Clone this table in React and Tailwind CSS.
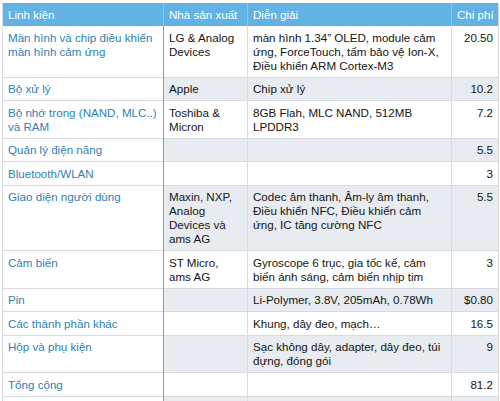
import React from "react";

const rows = [
  ["Màn hình và chip điều khiển màn hình cảm ứng", "LG & Analog Devices", "màn hình 1.34” OLED, module cảm ứng, ForceTouch, tấm bảo vệ Ion-X, Điều khiển ARM Cortex-M3", "20.50"],
  ["Bộ xử lý", "Apple", "Chip xử lý", "10.2"],
  ["Bộ nhớ trong (NAND, MLC..) và RAM", "Toshiba & Micron", "8GB Flah, MLC NAND, 512MB LPDDR3", "7.2"],
  ["Quản lý điện năng", "", "", "5.5"],
  ["Bluetooth/WLAN", "", "", "3"],
  ["Giao diện người dùng", "Maxin, NXP, Analog Devices và ams AG", "Codec âm thanh, Âm-ly âm thanh, Điều khiển NFC, Điều khiển cảm ứng, IC tăng cường NFC", "5.5"],
  ["Cảm biến", "ST Micro, ams AG", "Gyroscope 6 trục, gia tốc kế, cảm biến ánh sáng, cảm biến nhịp tim", "3"],
  ["Pin", "", "Li-Polymer, 3.8V, 205mAh, 0.78Wh", "$0.80"],
  ["Các thành phần khác", "", "Khung, dây đeo, mạch…", "16.5"],
  ["Hộp và phụ kiện", "", "Sạc không dây, adapter, dây đeo, túi đựng, đóng gói", "9"],
  ["Tổng cộng", "", "", "81.2"],
  ["", "", "", ""],
];

export default function App() {
  return (
    <div
      className="w-[500px] h-[401px] overflow-hidden bg-white pt-[3px] pl-[2px]"
      style={{ fontFamily: '"Liberation Sans", Arial, sans-serif' }}
    >
      <table className="border-collapse table-fixed w-[496px] text-[11.6px] leading-[14px]">
        <colgroup>
          <col className="w-[161px]" />
          <col className="w-[84px]" />
          <col className="w-[204px]" />
          <col className="w-[47px]" />
        </colgroup>
        <thead>
          <tr className="bg-[#62b2e3] text-white">
            <th className="font-normal text-left align-middle h-[23px] px-[5px] whitespace-nowrap border-l border-l-[#d9dde1] border-r border-r-[#8ec7ea]">Linh kiện</th>
            <th className="font-normal text-left align-middle px-[5px] whitespace-nowrap border-r border-r-[#8ec7ea]">Nhà sản xuất</th>
            <th className="font-normal text-left align-middle px-[5px] whitespace-nowrap border-r border-r-[#8ec7ea]">Diễn giải</th>
            <th className="font-normal text-right align-middle px-[5px] whitespace-nowrap border-r border-r-[#d9dde1]">Chi phí</th>
          </tr>
        </thead>
        <tbody>
          {rows.map((r, i) => {
            const odd = i % 2 === 1;
            const bg = odd ? "bg-[#e8ecf0]" : "bg-white";
            return (
              <tr key={i} className="border-b border-[#d6dade]">
                <td className="align-top bg-white text-[#2f7fb4] px-[5px] pt-[4.5px] pb-[4px] border-l border-l-[#d9dde1] border-r border-r-[#9a9a9a]">
                  {r[0] || "\u00a0"}
                </td>
                <td className={`align-top ${bg} text-[#151515] px-[5px] pt-[4.5px] pb-[4px] border-r border-r-[#d9dde1]`}>
                  {r[1]}
                </td>
                <td className={`align-top ${bg} text-[#151515] px-[5px] pt-[4.5px] pb-[4px] border-r border-r-[#d9dde1]`}>
                  {r[2]}
                </td>
                <td className={`align-top text-right ${bg} text-[#151515] px-[5px] pt-[4.5px] pb-[4px] whitespace-nowrap border-r border-r-[#d9dde1]`}>
                  {r[3]}
                </td>
              </tr>
            );
          })}
        </tbody>
      </table>
    </div>
  );
}
